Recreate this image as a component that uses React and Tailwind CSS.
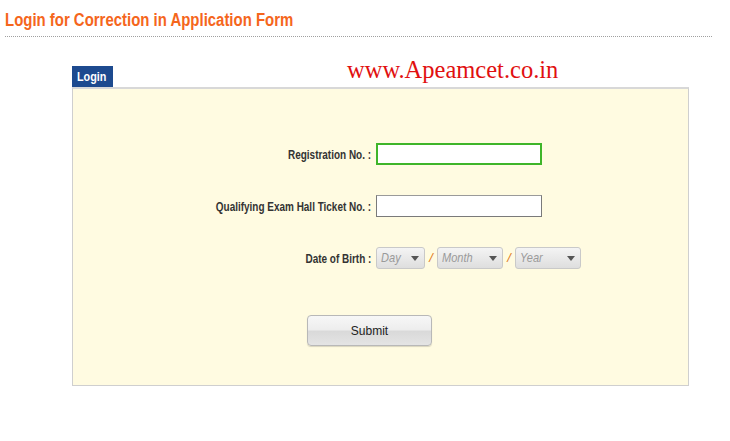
import React from 'react';

// Narrow look of the original (Arial Narrow) via horizontal scale
const Narrow = ({ children, origin = 'origin-right' }) => (
  <span className={`inline-block scale-x-[0.83] ${origin} whitespace-nowrap`}>{children}</span>
);

const Select = ({ label, width }) => (
  <div
    className={`${width} h-[22px] flex items-center justify-between pl-[4px] pr-[5px] rounded-[3px] border border-[#c9c9c9] bg-gradient-to-b from-[#f4f4f4] to-[#dedede]`}
  >
    <span className="inline-block scale-x-[0.85] origin-left italic font-normal text-[13px] text-[#9a9a9a]">{label}</span>
    <svg width="8" height="5" viewBox="0 0 8 5">
      <path d="M0 0h8L4 5z" fill="#555" />
    </svg>
  </div>
);

const Slash = () => (
  <span className="w-[12px] text-center italic font-normal text-[13px] text-[#e07a1a]">/</span>
);

const App = () => {
  return (
    <div className="w-[730px] h-[441px] bg-white font-['Liberation_Sans',Arial,sans-serif] overflow-hidden">
      {/* Heading */}
      <div className="pl-[5px] pt-[9px]">
        <h1 className="text-[18px] leading-[22px] font-bold text-[#f5661c]">
          <Narrow origin="origin-left">Login for Correction in Application Form</Narrow>
        </h1>
        <div className="mt-[5px] w-[707px] border-t border-dotted border-[#a0a0a0]" />
      </div>

      <div className="ml-[72px] mt-[28px] w-[617px]">
        {/* Tab row */}
        <div className="flex items-end h-[22px]">
          <div className="w-[41px] h-[21px] pl-[5px] flex items-center bg-[#1d4a8f] text-white text-[13px] font-bold">
            <Narrow origin="origin-left">Login</Narrow>
          </div>
          <div className="ml-[234px] mb-[4px] text-[24.5px] leading-[26px] text-[#e11010] font-['Liberation_Serif','Times_New_Roman',serif]">
            www.Apeamcet.co.in
          </div>
        </div>

        {/* Panel */}
        <div className="h-[299px] bg-[#fffbe1] border border-[#cfcfcf] border-t-[2px] border-t-[#d8d8d8]">
          <div className="grid grid-cols-[298px_auto] gap-x-[5px] items-center text-[12px] font-bold text-[#333] pt-[54px]">
            <div className="text-right pt-[2px]"><Narrow>Registration No. :</Narrow></div>
            <input className="w-[166px] h-[22px] border-2 border-[#3fb52a] bg-white outline-none" />
            <div className="h-[30px] col-span-2" />
            <div className="text-right pt-[2px]"><Narrow>Qualifying Exam Hall Ticket No. :</Narrow></div>
            <input className="w-[166px] h-[22px] border border-[#7a7a7a] border-t-[#9a9a9a] bg-white outline-none" />
            <div className="h-[30px] col-span-2" />
            <div className="text-right pt-[1px]"><Narrow>Date of Birth :</Narrow></div>
            <div className="flex items-center">
              <Select label="Day" width="w-[49px]" />
              <Slash />
              <Select label="Month" width="w-[66px]" />
              <Slash />
              <Select label="Year" width="w-[66px]" />
            </div>
          </div>

          <div className="mt-[46px] ml-[234px]">
            <button className="w-[125px] h-[31px] rounded-[4px] border border-[#b8b8b8] bg-[linear-gradient(to_bottom,#f7f7f7_0%,#ededed_48%,#d9d9d9_52%,#e4e4e4_100%)] text-[12px] text-[#222] shadow-[0_1px_1px_rgba(0,0,0,0.15)]">
              Submit
            </button>
          </div>
        </div>
      </div>
    </div>
  );
};

export default App;
